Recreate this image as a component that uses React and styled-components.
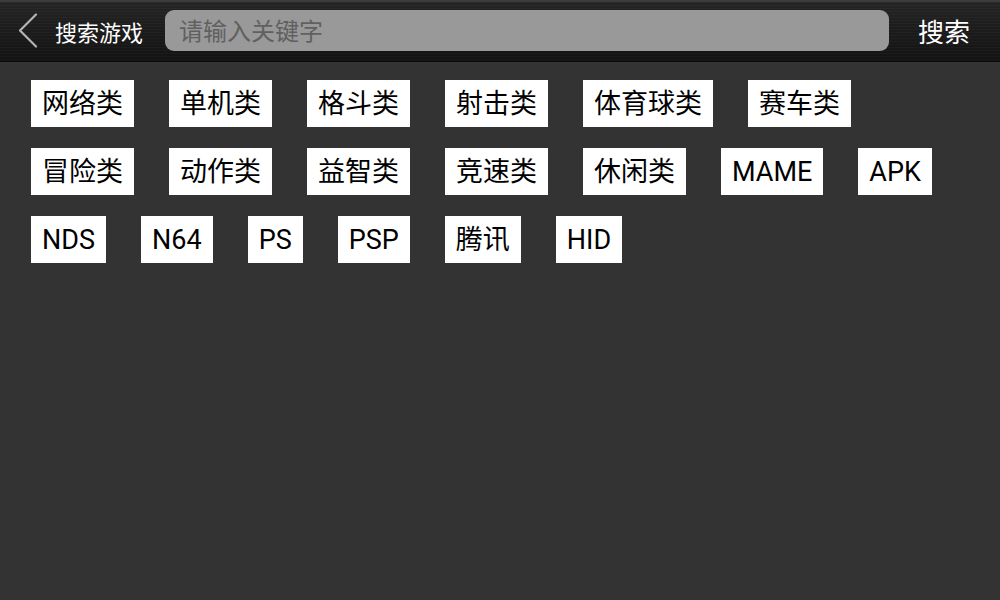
import React from "react";
import styled, { createGlobalStyle } from "styled-components";

const Global = createGlobalStyle`
  html, body { margin: 0; padding: 0; }
  body {
    background: #333333;
    font-family: Roboto, "Noto Sans CJK SC", sans-serif;
  }
`;

const Page = styled.div`
  width: 1000px;
  height: 600px;
  background: #333333;
  overflow: hidden;
`;

const Header = styled.header`
  height: 62px;
  box-sizing: border-box;
  display: flex;
  align-items: center;
  padding: 0 0 2px 17px;
  border-top: 2px solid #3c3c3c;
  border-bottom: 1px solid #0c0c0c;
  background:
    repeating-linear-gradient(
      to bottom,
      rgba(255, 255, 255, 0.025) 0px,
      rgba(255, 255, 255, 0.025) 1px,
      rgba(0, 0, 0, 0.04) 1px,
      rgba(0, 0, 0, 0.04) 3px
    ),
    linear-gradient(to bottom, #262626 0%, #1c1c1c 50%, #141414 100%);
`;

const BackButton = styled.button`
  all: unset;
  display: flex;
  align-items: center;
  width: 22px;
  height: 36px;
  cursor: pointer;
`;

const Title = styled.span`
  margin-left: 16px;
  color: #ffffff;
  font-size: 22px;
  font-family: "Noto Sans CJK SC", sans-serif;
  white-space: nowrap;
`;

const SearchBox = styled.input`
  box-sizing: border-box;
  margin-left: 22px;
  width: 724px;
  height: 41px;
  border: none;
  border-radius: 9px;
  background: #999999;
  padding: 0 0 2px 14px;
  font-size: 24px;
  font-family: "Noto Sans CJK SC", sans-serif;
  color: #333;
  outline: none;
  &::placeholder {
    color: #606060;
  }
`;

const SearchAction = styled.button`
  all: unset;
  margin-left: 29px;
  color: #ffffff;
  font-size: 26px;
  font-family: "Noto Sans CJK SC", sans-serif;
  cursor: pointer;
  white-space: nowrap;
`;

const TagArea = styled.div`
  display: flex;
  flex-direction: column;
  gap: 21px;
  padding: 18px 31px 0;
`;

const TagRow = styled.div`
  display: flex;
  gap: 35px;
`;

const Tag = styled.span`
  display: inline-flex;
  align-items: center;
  box-sizing: border-box;
  height: 47px;
  padding: 2px 11px 0;
  background: #ffffff;
  color: #000000;
  font-size: 27px;
  font-family: Roboto, "Noto Sans CJK SC", sans-serif;
  line-height: 1;
  white-space: nowrap;
  cursor: pointer;
`;

const rows = [
  ["网络类", "单机类", "格斗类", "射击类", "体育球类", "赛车类"],
  ["冒险类", "动作类", "益智类", "竞速类", "休闲类", "MAME", "APK"],
  ["NDS", "N64", "PS", "PSP", "腾讯", "HID"],
];

export default function App() {
  return (
    <Page>
      <Global />
      <Header>
        <BackButton aria-label="back">
          <svg width="22" height="36" viewBox="0 0 22 36">
            <polyline
              points="19,1.5 3,17.5 19,33.5"
              fill="none"
              stroke="#b4b4b4"
              strokeWidth="2.2"
              strokeLinecap="round"
              strokeLinejoin="round"
            />
          </svg>
        </BackButton>
        <Title>搜索游戏</Title>
        <SearchBox placeholder="请输入关键字" />
        <SearchAction>搜索</SearchAction>
      </Header>
      <TagArea>
        {rows.map((row, i) => (
          <TagRow key={i}>
            {row.map((t) => (
              <Tag key={t}>{t}</Tag>
            ))}
          </TagRow>
        ))}
      </TagArea>
    </Page>
  );
}
